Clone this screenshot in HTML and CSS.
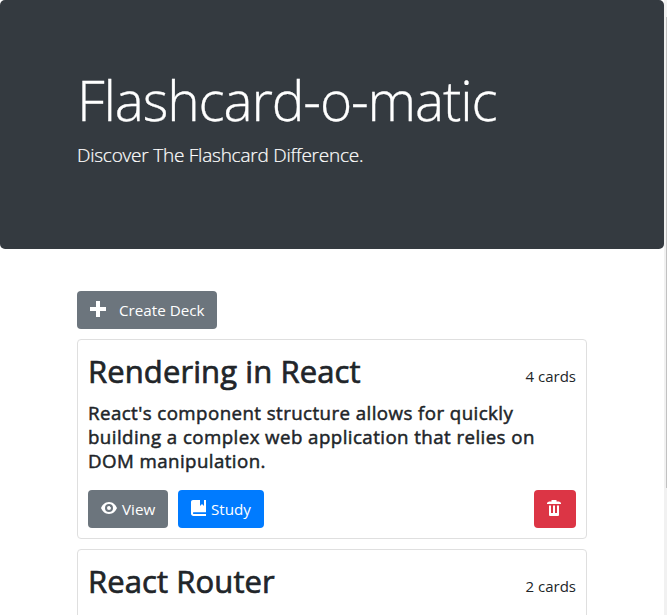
FILE: index.html
```html
<!DOCTYPE html>
<html lang="en">
<head>
<meta charset="utf-8">
<title>Flashcard-o-matic</title>
<link rel="stylesheet" href="styles.css">
</head>
<body>
<div class="page">
  <header class="hero">
    <h1 class="hero-title"><span>Flashcard-o-matic</span></h1>
    <p class="hero-lead"><span>Discover The Flashcard Difference.</span></p>
  </header>
  <main class="container">
    <a class="btn btn-secondary btn-create">
      <svg class="icon-plus" width="16" height="16" viewBox="0 0 16 16"><path fill="currentColor" d="M6 0h4v6h6v4h-6v6H6v-6H0V6h6z"/></svg>
      <span>Create Deck</span>
    </a>
    <section class="card">
      <div class="card-head">
        <h2 class="card-title"><span>Rendering in React</span></h2>
        <span class="card-count">4 cards</span>
      </div>
      <p class="card-text">React's component structure allows for quickly<br>building a complex web application that relies on<br>DOM manipulation.</p>
      <div class="actions">
        <a class="btn btn-secondary btn-view">
          <svg width="16" height="16" viewBox="0 0 16 16"><path fill="currentColor" fill-rule="evenodd" d="M8 2C4 2 1.300 5 0 8c1.300 3 4 6 8 6s6.700-3 8-6c-1.300-3-4-6-8-6zm0 2a4 4 0 1 1 0 8 4 4 0 0 1 0-8zm0 2a2 2 0 1 0 2 2c0-.3-.1-.5-.2-.8A1 1 0 0 1 8.800 6.200C8.500 6.100 8.300 6 8 6z"/></svg>
          <span>View</span>
        </a>
        <a class="btn btn-primary btn-study">
          <svg width="16" height="16" viewBox="0 0 16 16"><path fill="currentColor" d="M2 0C.9 0 0 .9 0 2v11.500C0 15 1 16 2.500 16H15v-2H2.500c-.7 0-.7-1.700 0-1.700H15V0h-2v6l-2-2-2 2V0z"/></svg>
          <span>Study</span>
        </a>
        <a class="btn btn-danger">
          <svg width="16" height="16" viewBox="0 0 16 16"><path fill="currentColor" d="M5.500 0h5v1.500H13l2 1.200V4H1V2.700l2-1.200h2.500zM3 5.500h2V13h2V5.500h2V13h2V5.500h2V15q0 1-1 1H4q-1 0-1-1z"/></svg>
        </a>
      </div>
    </section>
    <section class="card">
      <div class="card-head">
        <h2 class="card-title"><span>React Router</span></h2>
        <span class="card-count">2 cards</span>
      </div>
    </section>
  </main>
</div>
<div class="scrollbar"><div class="thumb"></div></div>
</body>
</html>
```
FILE: styles.css
```css
* { box-sizing: border-box; }
body {
  margin: 0;
  height: 615px;
  overflow: hidden;
  display: flex;
  background: #fff;
  color: #212529;
  font: 400 15.2px/24px "Open Sans", "Noto Sans", sans-serif;
}
h1, h2, p { margin: 0; }
svg { display: block; flex: none; }
.page { width: 664px; height: 615px; overflow: hidden; }
.hero {
  height: 249px;
  padding: 62px 77px 0;
  border-radius: 5px;
  background: #343a40;
  color: #fff;
}
.hero-title {
  height: 77px;
  font-size: 55px;
  font-weight: 300;
  line-height: 75px;
  letter-spacing: -1.15px;
  white-space: nowrap;
  -webkit-text-stroke: 0.3px currentColor;
}
.hero-lead {
  font-size: 19px;
  font-weight: 300;
  line-height: 32px;
  letter-spacing: -0.23px;
  -webkit-text-stroke: 0.2px currentColor;
}
.container { width: 510px; margin: 42px 0 0 77px; }
.btn {
  height: 38px;
  display: inline-flex;
  align-items: center;
  border-radius: 4px;
  color: #fff;
  white-space: nowrap;
}
.btn-secondary { background: #6c757d; }
.btn-primary { background: #007bff; }
.btn-danger { width: 42px; padding-left: 12px; margin-left: auto; background: #dc3545; }
.btn-create { display: flex; width: 140px; padding-left: 13px; gap: 13px; }
.btn-create svg { margin-bottom: 2px; }
.btn-view { width: 80px; padding-left: 13px; gap: 5px; }
.btn-study { width: 86px; padding-left: 13px; gap: 4px; }
.actions svg { margin-bottom: 3px; }
.card {
  height: 200px;
  margin-top: 10px;
  padding: 10px;
  border: 1px solid #dfdfdf;
  border-radius: 4px;
}
.card-head {
  height: 51px;
  display: flex;
  justify-content: space-between;
}
.card-title {
  font-size: 31px;
  font-weight: 400;
  line-height: 42px;
  letter-spacing: 0.1px;
  -webkit-text-stroke: 0.7px currentColor;
}
.card-count { padding-top: 14px; font-size: 15px; }
.card-text {
  height: 89px;
  font-size: 18.7px;
  font-weight: 400;
  line-height: 24px;
  letter-spacing: 0.43px;
  white-space: nowrap;
  -webkit-text-stroke: 0.5px currentColor;
}
.actions { display: flex; gap: 10px; }
.scrollbar { width: 3px; padding: 17px 0 0 2px; background: #f1f1f1; }
.thumb { height: 471px; background: #c1c1c1; }
```
